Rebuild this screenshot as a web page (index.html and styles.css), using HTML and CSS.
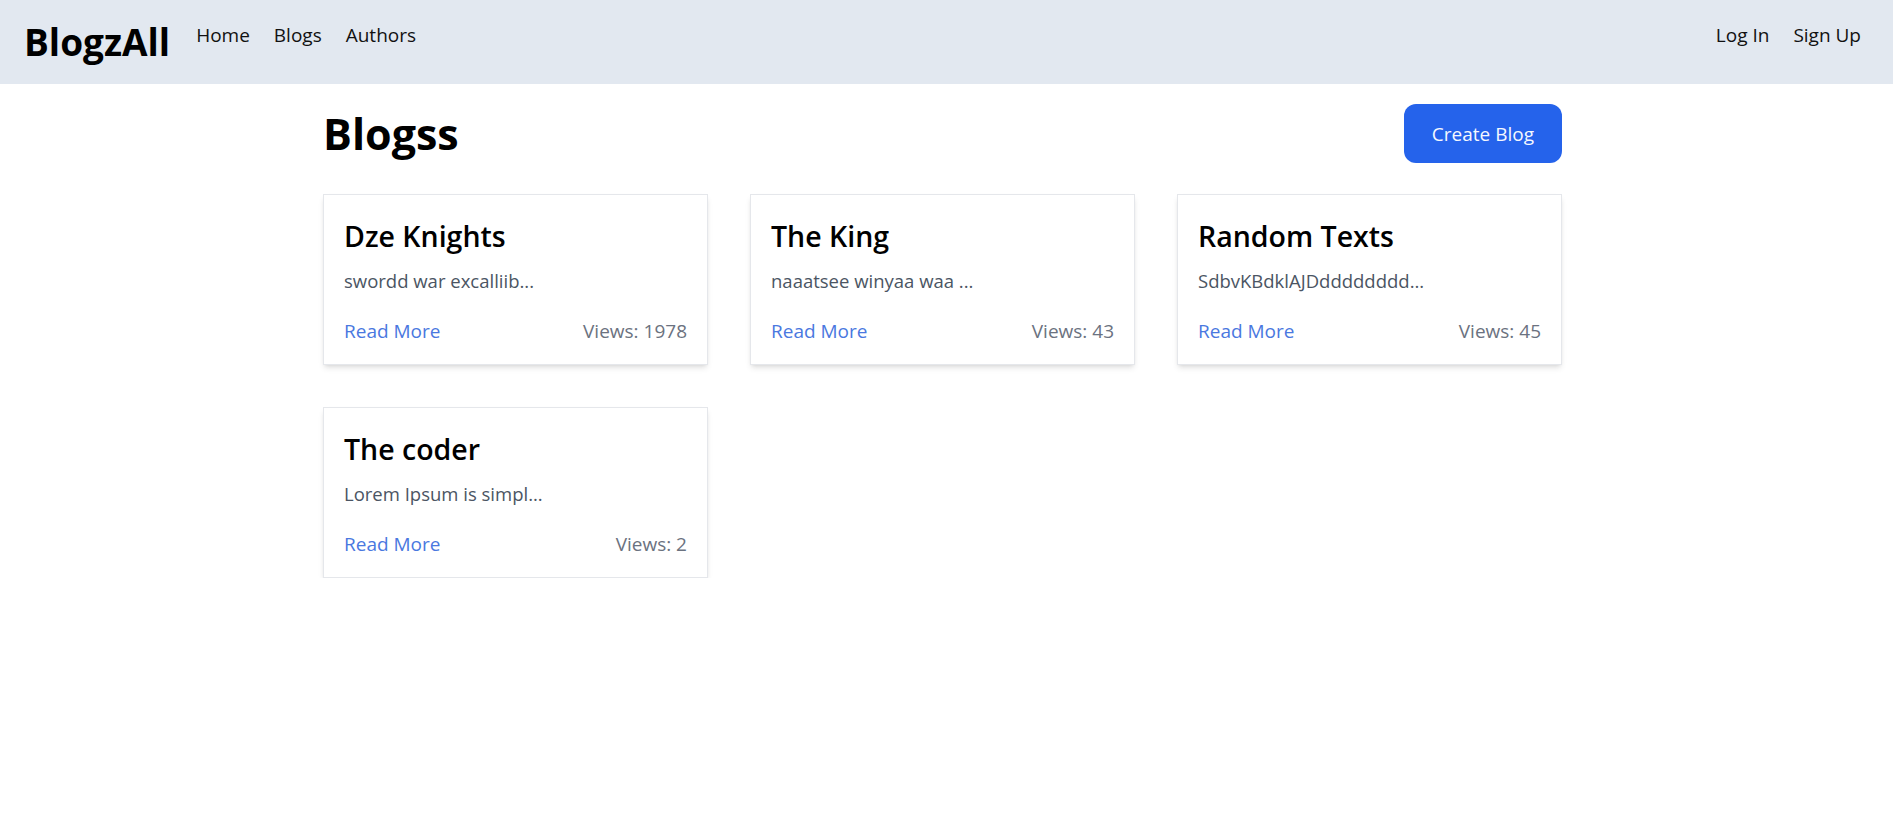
FILE: index.html
```html
<!DOCTYPE html>
<html lang="en">
<head>
<meta charset="utf-8">
<title>BlogzAll</title>
<link rel="stylesheet" href="styles.css">
</head>
<body>
<header class="topbar">
  <a class="logo" href="#">BlogzAll</a>
  <nav class="nav">
    <a href="#">Home</a>
    <a href="#">Blogs</a>
    <a href="#">Authors</a>
  </nav>
  <nav class="nav nav-right">
    <a href="#">Log In</a>
    <a href="#">Sign Up</a>
  </nav>
</header>
<main class="container">
  <div class="page-head">
    <h1 class="page-title">Blogss</h1>
    <button class="btn-create">Create Blog</button>
  </div>
  <div class="grid">
    <article class="card">
      <h2 class="card-title">Dze Knights</h2>
      <p class="card-text">swordd war excalliib...</p>
      <div class="card-foot"><a class="read-more" href="#">Read More</a><span class="views">Views: 1978</span></div>
    </article>
    <article class="card">
      <h2 class="card-title">The King</h2>
      <p class="card-text">naaatsee winyaa waa ...</p>
      <div class="card-foot"><a class="read-more" href="#">Read More</a><span class="views">Views: 43</span></div>
    </article>
    <article class="card">
      <h2 class="card-title">Random Texts</h2>
      <p class="card-text">SdbvKBdklAJDdddddddd...</p>
      <div class="card-foot"><a class="read-more" href="#">Read More</a><span class="views">Views: 45</span></div>
    </article>
    <article class="card">
      <h2 class="card-title">The coder</h2>
      <p class="card-text">Lorem Ipsum is simpl...</p>
      <div class="card-foot"><a class="read-more" href="#">Read More</a><span class="views">Views: 2</span></div>
    </article>
  </div>
</main>
</body>
</html>
```
FILE: styles.css
```css
* { box-sizing: border-box; }
html, body { margin: 0; padding: 0; background: #fff; }
body { font-family: "Open Sans", "Noto Sans", sans-serif; color: #111; }
a { text-decoration: none; color: inherit; }

.topbar {
  height: 84px;
  background: #e2e8f0;
  display: flex;
  align-items: center;
  padding: 0 20px 0 24px;
}
.logo {
  font-size: 37px;
  font-weight: 700;
  color: #000;
  margin-right: 14px;
  line-height: 1.2;
}
.nav {
  display: flex;
  margin-bottom: 15px;
}
.nav a {
  font-size: 19px;
  line-height: 28px;
  padding: 0 12px;
  color: #111;
}
.nav-right { margin-left: auto; }

.container {
  max-width: 1247px;
  margin: 0 auto;
  padding-right: 8px;
}
.page-head {
  display: flex;
  align-items: center;
  justify-content: space-between;
  margin-top: 20px;
  margin-bottom: 31px;
}
.page-title {
  margin: 0;
  font-size: 43px;
  font-weight: 700;
  color: #000;
  line-height: 1.2;
}
.btn-create {
  height: 59px;
  padding: 0 28px;
  border: none;
  border-radius: 12px;
  background: #2563eb;
  color: #f5f8ff;
  font-family: inherit;
  font-size: 19px;
}
.grid {
  display: grid;
  grid-template-columns: repeat(3, 1fr);
  gap: 42px;
}
.card {
  border: 1px solid #e5e7eb;
  background: #fff;
  padding: 21px 20px 19px;
  box-shadow: 0 4px 6px -1px rgba(0,0,0,0.1), 0 2px 4px -2px rgba(0,0,0,0.1);
}
.card-title {
  margin: 0 0 11px;
  font-size: 28.5px;
  font-weight: 600;
  line-height: 40px;
  color: #000;
}
.card-text {
  margin: 0 0 22px;
  font-size: 18.5px;
  line-height: 28px;
  color: #4b5563;
}
.card-foot {
  display: flex;
  justify-content: space-between;
  align-items: center;
  font-size: 19px;
  line-height: 28px;
}
.read-more { color: #4a78e0; }
.views { color: #6b7280; }
```
